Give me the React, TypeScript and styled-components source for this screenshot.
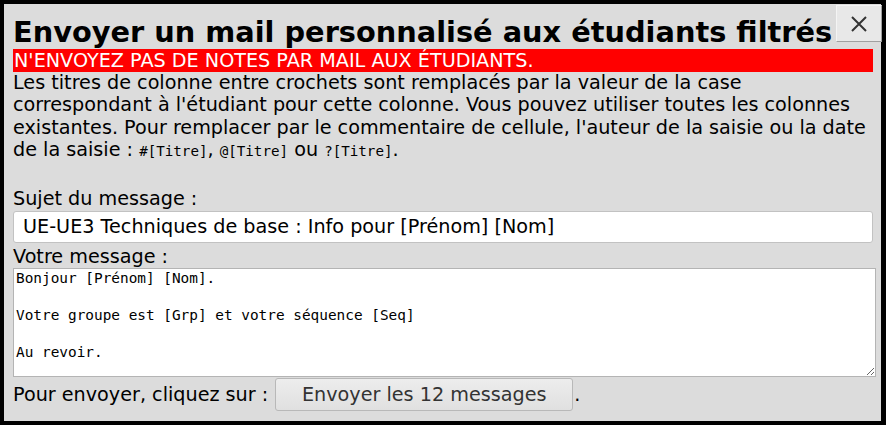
import React from "react";
import styled, { createGlobalStyle } from "styled-components";

const Global = createGlobalStyle`
  html, body { margin: 0; padding: 0; background: #dcdcdc; }
  body { font-family: "DejaVu Sans", sans-serif; }
`;

const Dialog = styled.div`
  position: relative;
  box-sizing: border-box;
  width: 886px;
  height: 425px;
  border: 4px solid #000;
  border-right-width: 5px;
  background: #dcdcdc;
  padding: 11px 8px 0 9px;
  color: #000;
  font-size: 19.2px;
  line-height: normal;
`;

const Title = styled.h1`
  margin: 0;
  font-size: 28.8px;
  font-weight: bold;
  line-height: normal;
  white-space: nowrap;
`;

const CloseButton = styled.button`
  position: absolute;
  top: 1px;
  right: -1px;
  width: 46px;
  height: 37px;
  box-sizing: border-box;
  background: #e8e8e8;
  border: 1px solid #f4f4f4;
  border-right-color: #a0a0a0;
  border-bottom-color: #a0a0a0;
  padding: 0;
  display: flex;
  align-items: center;
  justify-content: center;
`;

const Warning = styled.div`
  background: #ff0000;
  color: #fff;
  padding-left: 1px;
`;

const Paragraph = styled.p`
  margin: 0;
  line-height: 22.4px;
`;

const Code = styled.code`
  font-family: "DejaVu Sans Mono", monospace;
  font-size: 14.2px;
  line-height: 1;
`;

const Label = styled.div``;

const Spacer = styled.div`
  height: 25px;
`;

const SubjectInput = styled.input`
  display: block;
  box-sizing: border-box;
  width: 860px;
  height: 32px;
  margin: 1px 0 2px;
  border: 1px solid #c2c2c2;
  border-radius: 3px;
  background: #fff;
  font-family: "DejaVu Sans", sans-serif;
  font-size: 19.2px;
  padding: 0 9px;
  color: #000;
  outline: none;
`;

const MessageArea = styled.textarea`
  display: block;
  box-sizing: border-box;
  width: 863px;
  height: 109px;
  margin: 0;
  border: 1px solid #b4b4b4;
  background: #fff;
  font-family: "DejaVu Sans Mono", monospace;
  font-size: 14.4px;
  line-height: 18.5px;
  padding: 0 2px;
  color: #000;
  outline: none;
  resize: both;
`;

const SendRow = styled.div`
  display: flex;
  align-items: center;
  margin-top: 1px;
`;

const SendButton = styled.button`
  box-sizing: border-box;
  width: 298px;
  height: 33px;
  margin: 0 1px 0 7px;
  background: linear-gradient(#ededed, #e0e0e0);
  border: 1px solid #b8b8b8;
  border-radius: 3px;
  font-family: "DejaVu Sans", sans-serif;
  font-size: 19.2px;
  color: #333;
  padding: 0;
`;

const message = "Bonjour [Prénom] [Nom].\n\nVotre groupe est [Grp] et votre séquence [Seq]\n\nAu revoir.";

export default function App() {
  return (
    <>
      <Global />
      <Dialog>
        <Title>Envoyer un mail personnalisé aux étudiants filtrés</Title>
        <CloseButton aria-label="Fermer">
          <svg width="20" height="20" viewBox="0 0 20 20">
            <path d="M3 3 L17 17 M17 3 L3 17" stroke="#333" strokeWidth="2" />
          </svg>
        </CloseButton>
        <Warning>N'ENVOYEZ PAS DE NOTES PAR MAIL AUX ÉTUDIANTS.</Warning>
        <Paragraph>
          Les titres de colonne entre crochets sont remplacés par la valeur de la case
          correspondant à l'étudiant pour cette colonne. Vous pouvez utiliser toutes les colonnes
          existantes. Pour remplacer par le commentaire de cellule, l'auteur de la saisie ou la date
          de la saisie : <Code>#[Titre]</Code>, <Code>@[Titre]</Code> ou <Code>?[Titre]</Code>.
        </Paragraph>
        <Spacer />
        <Label>Sujet du message :</Label>
        <SubjectInput defaultValue="UE-UE3 Techniques de base : Info pour [Prénom] [Nom]" />
        <Label>Votre message :</Label>
        <MessageArea defaultValue={message} />
        <SendRow>
          Pour envoyer, cliquez sur :<SendButton>Envoyer les 12 messages</SendButton>.
        </SendRow>
      </Dialog>
    </>
  );
}
